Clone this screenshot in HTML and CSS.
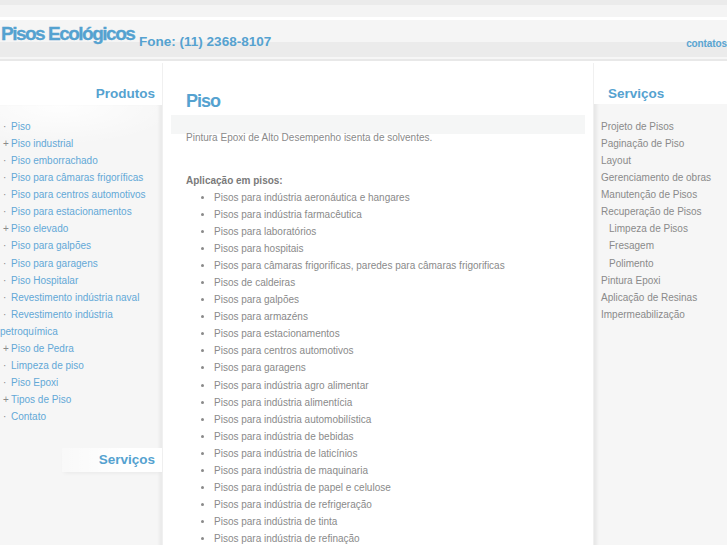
FILE: index.html
```html
<!DOCTYPE html>
<html lang="pt">
<head>
<meta charset="utf-8">
<title>Pisos Ecológicos</title>
<link rel="stylesheet" href="styles.css">
</head>
<body>
<header class="top">
  <div class="band band-a"></div>
  <div class="band band-b"></div>
  <div class="band band-c"></div>
  <div class="bar">
    <div class="brand"><span class="logo">Pisos Ecológicos</span> <span class="phone">Fone: (11) 2368-8107</span></div>
    <a class="contatos" href="#">contatos</a>
  </div>
  <div class="band band-d"></div>
  <div class="band band-e"></div>
</header>
<div class="columns">
  <aside class="left">
    <h2 class="side-title">Produtos</h2>
    <div class="left-body">
      <ul class="prod">
        <li>Piso</li>
        <li class="plus">Piso industrial</li>
        <li>Piso emborrachado</li>
        <li>Piso para câmaras frigoríficas</li>
        <li>Piso para centros automotivos</li>
        <li>Piso para estacionamentos</li>
        <li class="plus">Piso elevado</li>
        <li>Piso para galpões</li>
        <li>Piso para garagens</li>
        <li>Piso Hospitalar</li>
        <li>Revestimento indústria naval</li>
        <li>Revestimento indústria petroquímica</li>
        <li class="plus">Piso de Pedra</li>
        <li>Limpeza de piso</li>
        <li>Piso Epoxi</li>
        <li class="plus">Tipos de Piso</li>
        <li>Contato</li>
      </ul>
      <h2 class="side-title2">Serviços</h2>
    </div>
  </aside>
  <main class="main">
    <h1 class="page-title">Piso</h1>
    <div class="title-band"></div>
    <p class="intro">Pintura Epoxi de Alto Desempenho isenta de solventes.</p>
    <p class="apl">Aplicação em pisos:</p>
    <ul class="uses">
      <li>Pisos para indústria aeronáutica e hangares</li>
      <li>Pisos para indústria farmacêutica</li>
      <li>Pisos para laboratórios</li>
      <li>Pisos para hospitais</li>
      <li>Pisos para câmaras frigorificas, paredes para câmaras frigorificas</li>
      <li>Pisos de caldeiras</li>
      <li>Pisos para galpões</li>
      <li>Pisos para armazéns</li>
      <li>Pisos para estacionamentos</li>
      <li>Pisos para centros automotivos</li>
      <li>Pisos para garagens</li>
      <li>Pisos para indústria agro alimentar</li>
      <li>Pisos para indústria alimentícia</li>
      <li>Pisos para indústria automobilística</li>
      <li>Pisos para indústria de bebidas</li>
      <li>Pisos para indústria de laticínios</li>
      <li>Pisos para indústria de maquinaria</li>
      <li>Pisos para indústria de papel e celulose</li>
      <li>Pisos para indústria de refrigeração</li>
      <li>Pisos para indústria de tinta</li>
      <li>Pisos para indústria de refinação</li>
    </ul>
  </main>
  <aside class="right">
    <h2 class="side-title-r">Serviços</h2>
    <div class="right-body">
      <ul class="serv">
        <li>Projeto de Pisos</li>
        <li>Paginação de Piso</li>
        <li>Layout</li>
        <li>Gerenciamento de obras</li>
        <li>Manutenção de Pisos</li>
        <li>Recuperação de Pisos</li>
        <li class="sub">Limpeza de Pisos</li>
        <li class="sub">Fresagem</li>
        <li class="sub">Polimento</li>
        <li>Pintura Epoxi</li>
        <li>Aplicação de Resinas</li>
        <li>Impermeabilização</li>
      </ul>
    </div>
  </aside>
</div>
</body>
</html>
```

FILE: styles.css
```css
*, *::before, *::after { box-sizing: border-box; }
html, body { margin: 0; padding: 0; }
body {
  width: 727px;
  height: 545px;
  overflow: hidden;
  background: #fff;
  font-family: "Liberation Sans", Arial, sans-serif;
  font-size: 10px;
  color: #8a8a8a;
}
ul { list-style: none; margin: 0; padding: 0; }
h1, h2, p { margin: 0; }

.top { width: 100%; }
.band { width: 100%; }
.band-a { height: 5px; background: #ebebeb; }
.band-b { height: 12px; background: #f4f4f4; }
.band-c { height: 3px; background: #fff; }
.band-d { height: 2px; background: #f6f6f6; }
.band-e { height: 2px; background: #e8e8e8; }
.bar {
  height: 37px;
  display: flex;
  align-items: flex-start;
  background: linear-gradient(#f5f5f5 0, #f5f5f5 22px, #ebebeb 22px, #ebebeb 100%);
}
.brand {
  padding-top: 3px;
  padding-left: 1px;
  line-height: 22px;
  white-space: nowrap;
}
.logo {
  font-size: 19px;
  font-weight: bold;
  letter-spacing: -1.5px;
  color: #55a2d0;
  -webkit-text-stroke: 0.3px #55a2d0;
}
.phone {
  margin-left: 2px;
  font-size: 13.5px;
  font-weight: bold;
  color: #55a2d0;
  vertical-align: -6px;
}
.contatos {
  margin-left: auto;
  padding-top: 18px;
  font-size: 10px;
  line-height: 12px;
  font-weight: bold;
  letter-spacing: -0.1px;
  color: #5aa5d2;
  text-decoration: none;
  white-space: nowrap;
}

.columns {
  display: grid;
  grid-template-columns: 163px 430px 134px;
  height: 485px;
}

.left {
  display: flex;
  flex-direction: column;
  border-right: 1px solid #f0f0f0;
  margin-top: 2px;
}
.side-title {
  height: 42px;
  padding: 22px 7px 0 0;
  text-align: right;
  font-size: 13.5px;
  line-height: 18px;
  font-weight: bold;
  color: #55a2d0;
}
.left-body {
  flex: 1;
  background:
    radial-gradient(ellipse 120px 40px at 60px 0, rgba(255,255,255,0.9), rgba(255,255,255,0) 100%),
    #f6f6f6;
  box-shadow: inset -4px 0 3px -1px #ebebeb;
  padding-top: 13px;
}
.prod {
  width: 156px;
  line-height: 17.06px;
  color: #63a8d6;
}
.prod li::before {
  content: "·";
  display: inline-block;
  width: 11px;
  padding-left: 3px;
  color: #8a8a8a;
}
.prod li.plus::before { content: "+"; }
.side-title2 {
  margin-top: 23px;
  margin-left: 62px;
  height: 24px;
  padding-right: 7px;
  text-align: right;
  font-size: 13.5px;
  line-height: 24px;
  font-weight: bold;
  color: #55a2d0;
  background: linear-gradient(to right, rgba(255,255,255,0.3), #fff 60%);
  box-shadow: 0 3px 4px -2px rgba(0,0,0,0.06);
}

.main {
  background: #fff;
  padding-top: 29px;
}
.page-title {
  padding-left: 23px;
  font-size: 18px;
  line-height: 22px;
  letter-spacing: -1px;
  font-weight: bold;
  color: #55a2d0;
  margin-bottom: 3px;
}
.title-band {
  height: 19px;
  margin: 0 8px;
  background: #f5f6f6;
}
.intro {
  margin-top: -5px;
  padding-left: 23px;
  line-height: 17px;
}
.apl {
  margin-top: 27px;
  padding-left: 23px;
  line-height: 16px;
  font-weight: bold;
  color: #7a7a7a;
}
.uses {
  list-style: disc;
  padding-left: 51px;
  line-height: 17.05px;
}
.uses li::marker { color: #8a8a8a; }

.right {
  display: flex;
  flex-direction: column;
  border-left: 1px solid #f0f0f0;
  margin-top: 2px;
}
.side-title-r {
  height: 41px;
  padding: 22px 0 0 14px;
  font-size: 13.5px;
  line-height: 18px;
  font-weight: bold;
  color: #55a2d0;
}
.right-body {
  flex: 1;
  background: #f6f6f6;
  box-shadow: inset 5px 0 3px -2px #e8e8e8;
  padding: 14px 0 0 7px;
}
.serv { line-height: 17.06px; }
.serv .sub { padding-left: 8px; }
```
